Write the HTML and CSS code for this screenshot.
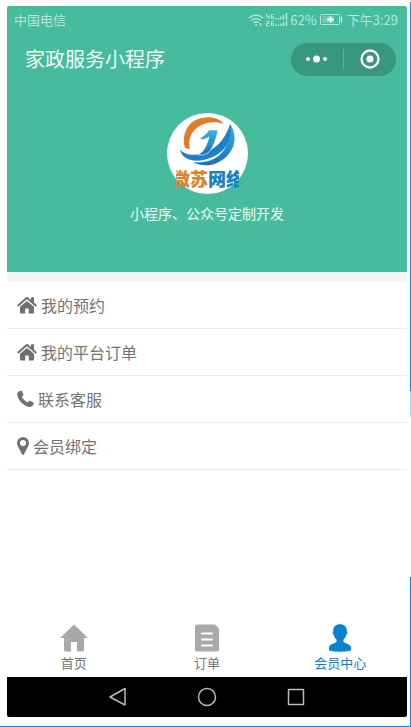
FILE: index.html
```html
<!DOCTYPE html>
<html lang="zh-CN">
<head>
<meta charset="utf-8">
<meta name="viewport" content="width=device-width, initial-scale=1">
<title>家政服务小程序</title>
<link rel="stylesheet" href="styles.css">
</head>
<body>
<div class="phone">
  <header class="hero">
    <div class="status">
      <span class="carrier">中国电信</span>
      <svg class="wifi" width="16" height="14" viewBox="0 0 16 14" fill="none" stroke="currentColor" stroke-width="1.3">
        <path d="M1 5.2C5 1.2 11 1.2 15 5.2M3.3 7.6C6 5 10 5 12.700 7.600M5.500 9.900C7 8.500 9 8.500 10.500 9.900"/>
        <circle cx="8" cy="11.800" r="1" fill="currentColor" stroke="none"/>
        <path d="M12.500 10v3"/>
      </svg>
      <svg class="signal" width="22" height="14" viewBox="0 0 22 14" fill="none" stroke="currentColor">
        <path d="M.7 1v3h3M3.200 2v4M7.500 1.500h-2v4h2v-2h-1M.5 8.500h2.500v2h-2.500v2.500h3M7.500 8.500h-2v4h2v-2h-1"/>
        <path stroke-width="1.500" d="M10 5v1.500M12.500 5v1.500M15 3.500v3M17.500 2v4.500M20.500 0v6.500M10 11.500v1.500M12.500 11.500v1.500M15 10.500v2.500M17.500 9v4M20.500 7.500v5.500"/>
      </svg>
      <span>62%</span>
      <svg class="battery" width="23" height="12" viewBox="0 0 23 12" fill="none" stroke="currentColor">
        <rect x=".5" y=".5" width="19" height="10" rx="1"/>
        <rect x="2" y="2" width="12" height="7" fill="currentColor" stroke="none" opacity=".35"/>
        <path stroke="#fff" stroke-width="2" d="M7 5.500h7M10.500 2.500v6"/>
        <path stroke-width="1.500" d="M21.500 2.500v6"/>
      </svg>
      <span>下午3:29</span>
    </div>
    <div class="titlebar">
      <h1>家政服务小程序</h1>
      <div class="capsule">
        <button type="button" aria-label="更多">
          <svg width="28" height="10" viewBox="0 0 28 10" fill="currentColor"><circle cx="5" cy="5" r="2"/><circle cx="13.500" cy="5" r="3.500"/><circle cx="22" cy="5" r="2"/></svg>
        </button>
        <button type="button" aria-label="关闭">
          <svg width="20" height="20" viewBox="0 0 20 20"><circle cx="10" cy="10" r="8.500" fill="none" stroke="currentColor" stroke-width="2.300"/><circle cx="10" cy="10" r="3.500" fill="currentColor"/></svg>
        </button>
      </div>
    </div>
    <div class="profile">
      <svg class="avatar" width="81" height="81" viewBox="0 0 81 81" role="img" aria-label="微苏网络">
        <defs>
          <clipPath id="disc"><rect x="9" y="0" width="63" height="81"/></clipPath>
          <linearGradient id="blue" x1="0" y1="0" x2="0" y2="1"><stop offset="0" stop-color="#39b3e2"/><stop offset="1" stop-color="#1a70ba"/></linearGradient>
        </defs>
        <circle cx="40.500" cy="40.500" r="40.500" fill="#fff"/>
        <path fill="#e57b28" d="M18 35C14 20 22 7 35 5C44 3 52 5 57 11C49 8 38 9 31 14C23 20 21 27 23 36Z"/>
        <path fill="url(#blue)" d="M63 11C70 21 69 33 61 42C51 53 37 55 26 49C41 51 54 45 59 33C62 26 63 19 63 11Z"/>
        <path fill="#1f80c8" d="M13 36C16 41 24 43 35 41C47 37 58 28 63 11C66 25 59 37 48 43C32 51 15 49 13 36Z"/>
        <path fill="url(#blue)" stroke="#fff" stroke-width=".6" d="M32 26C36 24 39 21 42 17H51C49 27 46 35 41 40Q37 43 31 42C38 38 40 31 42 24C39 26 36 27 32 26Z"/>
        <g clip-path="url(#disc)" class="logo-text"><text x="5" y="73" fill="#d8842c">微苏</text><text x="41" y="73" fill="#1682c4">网络</text></g>
      </svg>
      <p>小程序、公众号定制开发</p>
    </div>
  </header>

  <main>
    <ul class="menu">
      <li><a href="#booking"><svg width="20" height="18" viewBox="0 0 20 18" fill="currentColor"><path d="M10 5L3 10.800V16.500q0 1 1 1H8.200v-5h3.600v5H16q1 0 1-1V10.800Z"/><path d="M0 9.200L9 1.300q1-.8 2 0L14 3.900V1.200h3v5.300L20 9.200l-1.300 1.500L10 3.300L1.300 10.700Z"/></svg>我的预约</a></li>
      <li><a href="#orders"><svg width="20" height="18" viewBox="0 0 20 18" fill="currentColor"><path d="M10 5L3 10.800V16.500q0 1 1 1H8.200v-5h3.600v5H16q1 0 1-1V10.800Z"/><path d="M0 9.200L9 1.300q1-.8 2 0L14 3.900V1.200h3v5.300L20 9.200l-1.300 1.500L10 3.300L1.300 10.700Z"/></svg>我的平台订单</a></li>
      <li><a href="#service"><svg width="17" height="18" viewBox="0 0 17 18" fill="currentColor"><path d="M3.800.8Q4.600.5 5 1.300L6.500 4.500Q6.700 5.200 5.200 6.200Q4.700 6.700 5.200 7.500Q7 10.500 10 12.200Q10.800 12.600 11.200 12Q12.300 10.300 13 10.700L16.400 12.600Q17 13 16.700 13.800Q15.500 17 12.300 17Q8.500 16.500 4.500 12.700Q.5 8.500.1 4.500Q.1 1.800 3.800.8Z"/></svg>联系客服</a></li>
      <li><a href="#bind"><svg width="12" height="20" viewBox="0 0 12 20" fill="currentColor"><path fill-rule="evenodd" d="M6 1a6 6 0 0 1 6 6q0 1.500-.6 2.700L7 18.300q-1 1.300-2 0L.6 9.700Q0 8.500 0 7a6 6 0 0 1 6-6Zm0 3a3 3 0 1 0 0 6a3 3 0 0 0 0-6Z"/></svg>会员绑定</a></li>
    </ul>
  </main>

  <nav class="tabs">
    <a href="#home"><svg width="28" height="28" viewBox="0 0 28 28" fill="currentColor"><path d="M14 .5L28 14H24V26q0 1.500-1.500 1.500H17V18H11v9.500H5.500Q4 27.500 4 26V14H0Z"/></svg>首页</a>
    <a href="#list"><svg width="28" height="28" viewBox="0 0 28 28"><path fill="currentColor" d="M4 .5H22L26 4.500V26q0 1.500-1.500 1.500H4q-2 0-2-2v-23q0-2 2-2Z"/><path stroke="#fff" stroke-width="2" stroke-linecap="round" d="M9 9.500h10M9 15.500h10M9 21.500h10"/></svg>订单</a>
    <a href="#member" class="active" aria-current="page"><svg width="28" height="28" viewBox="0 0 28 28" fill="currentColor"><path d="M14 .3C18.500.3 21 3 20.800 7.500C21.700 8 21.200 10.300 20.200 11C19.700 13 18.500 14.500 17.500 15.500V18C19 19.500 25 20 25 23.500V26.500Q14 29 3 26.500V23.500C3 20 9 19.500 10.500 18V15.500C9.500 14.500 8.300 13 7.800 11C6.800 10.300 6.300 8 7.200 7.500C7 3 9.500.3 14 .3Z"/></svg>会员中心</a>
  </nav>

  <div class="system">
    <button type="button" aria-label="返回"><svg width="20" height="20" viewBox="0 0 20 20"><path d="M17 1.500V18L2 10Z"/></svg></button>
    <button type="button" aria-label="主页"><svg width="20" height="20" viewBox="0 0 20 20"><circle cx="10" cy="10" r="8.500"/></svg></button>
    <button type="button" aria-label="最近任务"><svg width="20" height="20" viewBox="0 0 20 20"><rect x="2.500" y="2.500" width="15" height="15"/></svg></button>
  </div>
</div>
</body>
</html>
```
FILE: styles.css
```css
* { box-sizing: border-box; }

body {
  margin: 0;
  min-height: 100vh;
  display: flex;
  padding: 6px 4px 9px 7px;
  border-bottom: 1px solid #1f7ae6;
  background:
    linear-gradient(#fff 2px, #2f7fd8 2px 391px, #9ddcf8 391px 414px, #fff 419px 577px, #1f7ae6 577px) right top / 1px 100% no-repeat #fff;
  font-family: "Noto Sans CJK SC", sans-serif;
  color: #737373;
}

a { color: inherit; text-decoration: none; }

button {
  padding: 0;
  border: 0;
  background: none;
  color: inherit;
  display: flex;
  align-items: center;
  justify-content: center;
}

svg { display: block; flex: none; }

.phone {
  flex: 1;
  display: flex;
  flex-direction: column;
  border-radius: 2px;
  overflow: hidden;
}

.hero {
  background: #46bc9d;
  color: #fff;
  padding-bottom: 48px;
}

.status {
  height: 28px;
  padding: 0 9px 0 7px;
  display: flex;
  align-items: center;
  gap: 2px;
  font-size: 13px;
  line-height: 20px;
  color: #b5e6d8;
}

.carrier { margin-right: auto; }
.battery { margin: 0 2px 0 1px; }

.titlebar {
  height: 50px;
  padding: 0 10px 0 18px;
  display: flex;
  align-items: center;
  justify-content: space-between;
}

h1 {
  margin: 0;
  font-size: 20px;
  font-weight: 400;
  line-height: 28px;
  color: #f0fbf7;
}

.capsule {
  width: 107px;
  height: 35px;
  display: flex;
  align-items: center;
  border: 1px solid #57b59b;
  border-radius: 18px;
  background: #38987c;
}

.capsule button { flex: 1; height: 20px; }
.capsule button + button { border-left: 1px solid #62ad98; }

.profile {
  padding-top: 29px;
  display: flex;
  flex-direction: column;
  align-items: center;
}

.profile p {
  margin: 9px 0 0;
  font-size: 14px;
  line-height: 21px;
  color: #f0fbf7;
}

.logo-text { font-size: 18px; font-weight: 900; }

main {
  flex: 1;
  border-top: 10px solid #f4f4f4;
}

.menu {
  margin: 0;
  padding: 0;
  list-style: none;
}

.menu a {
  height: 47px;
  padding: 0 10px;
  display: flex;
  align-items: center;
  gap: 4px;
  border-bottom: 1px solid #ebebeb;
  font-size: 16px;
  line-height: 24px;
}

.menu svg { color: #707070; }

.tabs {
  height: 59px;
  display: grid;
  grid-template-columns: repeat(3, 1fr);
}

.tabs a {
  padding-top: 6px;
  display: flex;
  flex-direction: column;
  align-items: center;
  gap: 2px;
  font-size: 13px;
  line-height: 18px;
}

.tabs svg { color: #a9a9a9; }
.tabs .active, .tabs .active svg { color: #0a82d0; }

.system {
  height: 40px;
  padding: 0 67px;
  display: grid;
  grid-template-columns: repeat(3, 1fr);
  background: #000;
}

.system svg {
  fill: none;
  stroke: #bbb;
  stroke-width: 1.5;
  stroke-linejoin: round;
}
```
